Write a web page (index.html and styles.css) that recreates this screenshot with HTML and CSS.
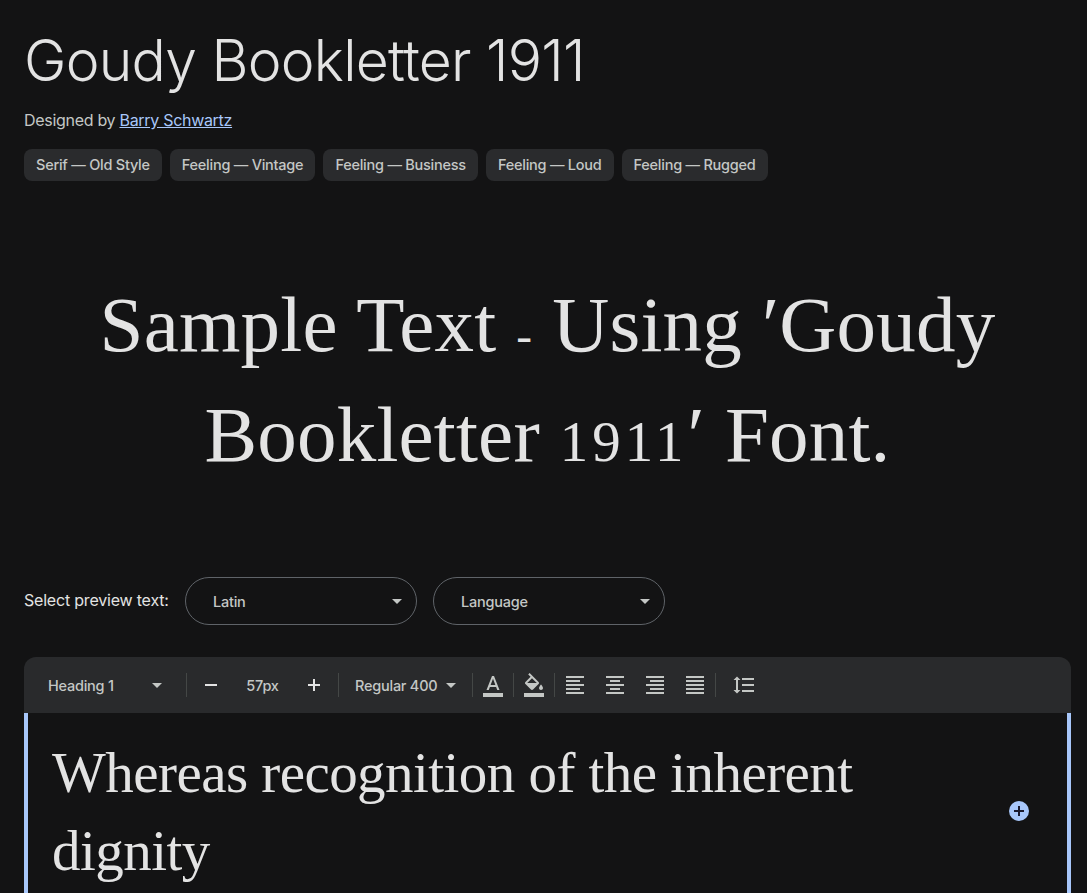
FILE: index.html
```html
<!DOCTYPE html>
<html lang="en">
<head>
<meta charset="utf-8">
<title>Goudy Bookletter 1911</title>
<link rel="stylesheet" href="styles.css">
</head>
<body>
<main class="page">
  <h1 class="title">Goudy Bookletter 1911</h1>
  <p class="designer">Designed by <a href="#">Barry Schwartz</a></p>
  <ul class="chips">
    <li class="chip">Serif — Old Style</li>
    <li class="chip">Feeling — Vintage</li>
    <li class="chip">Feeling — Business</li>
    <li class="chip">Feeling — Loud</li>
    <li class="chip">Feeling — Rugged</li>
  </ul>
  <p class="sample">Sample Text <span class="dash">-</span> Using ′Goudy<br>Bookletter <span class="figures">1911</span>′ Font.</p>
  <div class="select-row">
    <span class="select-label">Select preview text:</span>
    <div class="select"><span>Latin</span><i class="caret"></i></div>
    <div class="select"><span>Language</span><i class="caret"></i></div>
  </div>
  <div class="toolbar">
    <div class="tool style-tool"><span>Heading 1</span><i class="caret"></i></div>
    <i class="sep"></i>
    <div class="size-tool">
      <svg class="icon" viewBox="0 0 24 24"><path d="M6 12h12" /></svg>
      <span class="size">57px</span>
      <svg class="icon" viewBox="0 0 24 24"><path d="M12 6v12M6 12h12" /></svg>
    </div>
    <i class="sep"></i>
    <div class="tool weight-tool"><span>Regular 400</span><i class="caret"></i></div>
    <i class="sep"></i>
    <svg class="ticon" viewBox="0 0 24 24"><path class="fill" d="M2 20h20v4H2z"/><path class="fill" d="M11 3L5.500 17h2.250l1.120-3h6.250l1.120 3h2.250L13 3h-2zm-1.380 9L12 5.670 14.380 12H9.620z"/></svg>
    <i class="sep"></i>
    <svg class="ticon" viewBox="0 0 24 24"><path class="fill" d="M2 20h20v4H2z"/><path class="fill" d="M16.560 8.940L7.620 0 6.210 1.410l2.380 2.380-5.150 5.150c-.59.59-.59 1.540 0 2.120l5.500 5.500c.29.29.68.44 1.060.44s.77-.15 1.060-.44l5.500-5.500c.59-.58.59-1.530 0-2.120zM5.210 10L10 5.210 14.790 10H5.210zM19 11.500s-2 2.170-2 3.500c0 1.100.9 2 2 2s2-.9 2-2c0-1.330-2-3.500-2-3.500z"/></svg>
    <i class="sep"></i>
    <div class="aligns">
      <svg class="ticon" viewBox="0 0 24 24"><path class="line" d="M3 4h18M3 8h14M3 12h18M3 16h14M3 20h18" /></svg>
      <svg class="ticon" viewBox="0 0 24 24"><path class="line" d="M3 4h18M7 8h10M3 12h18M7 16h10M3 20h18" /></svg>
      <svg class="ticon" viewBox="0 0 24 24"><path class="line" d="M3 4h18M7 8h14M3 12h18M7 16h14M3 20h18" /></svg>
      <svg class="ticon" viewBox="0 0 24 24"><path class="line" d="M3 4h18M3 8h18M3 12h18M3 16h18M3 20h18" /></svg>
    </div>
    <i class="sep"></i>
    <svg class="ticon spacing" viewBox="0 0 24 24"><path class="fill" d="M6 7h2.500L5 3.500 1.500 7H4v10H1.500L5 20.500 8.500 17H6V7zm4-2v2h12V5H10zm0 14h12v-2H10v2zm0-6h12v-2H10v2z"/></svg>
  </div>
  <div class="editor">
    <p class="editor-text">Whereas recognition of the inherent dignity</p>
    <span class="add"><svg viewBox="0 0 20 20"><path d="M10 5v10M5 10h10" /></svg></span>
  </div>
</main>
</body>
</html>
```
FILE: styles.css
```css
* { box-sizing: border-box; }
html, body { margin: 0; height: 893px; overflow: hidden; background: #131314; }
body { color: #e3e3e3; font-family: "Inter", "Liberation Sans", sans-serif; }
.page { padding: 26px 16px 0 24px; }
.title { margin: 0; padding-top: 1px; height: 69px; font-family: "Inter", sans-serif; font-weight: 350; font-size: 57px; line-height: 68px; letter-spacing: -.75px; color: #e3e3e3; white-space: nowrap; }
.designer { margin: 15px 0 0; font-size: 16px; line-height: 20px; color: #c4c7c5; letter-spacing: -.3px; }
.designer a { color: #a8c7fa; text-decoration: underline; }
.chips { list-style: none; margin: 19px 0 0; padding: 0; display: flex; gap: 8px; }
.chip { height: 32px; padding: 0 12px; border-radius: 8px; background: #2a2b2d; color: #c4c7c5; font-size: 14.500px; font-weight: 500; line-height: 32px; letter-spacing: -.24px; white-space: nowrap; }
.sample { margin: 89px 0 0; height: 307px; text-align: center; font-family: "Liberation Serif", serif; font-size: 79px; line-height: 110px; color: #e3e3e3; letter-spacing: .2px; }
.dash { font-size: .6em; line-height: 0; }
.figures { font-size: .72em; line-height: 0; letter-spacing: 4px; }
.select-row { display: flex; align-items: center; height: 48px; }
.select-label { font-size: 16px; color: #e3e3e3; width: 161px; letter-spacing: -.2px; position: relative; top: -1px; }
.select { width: 232px; height: 48px; border: 1px solid #5f6368; border-radius: 24px; padding: 0 14px 0 27px; display: flex; align-items: center; justify-content: space-between; font-size: 14.500px; color: #c4c7c5; font-weight: 500; margin-right: 16px; letter-spacing: -.24px; }
.caret { display: block; width: 0; height: 0; border-left: 5px solid transparent; border-right: 5px solid transparent; border-top: 5px solid #c4c7c5; }
.toolbar { margin-top: 32px; height: 56px; background: #292a2c; border-radius: 12px 12px 0 0; display: flex; align-items: center; padding-left: 24px; color: #c4c7c5; font-size: 14.500px; font-weight: 500; letter-spacing: -.24px; }
.tool { display: flex; align-items: center; justify-content: space-between; }
.style-tool { width: 114px; margin-right: 24px; }
.weight-tool { width: 101px; margin: 0 16px; }
.sep { display: block; width: 1px; height: 24px; background: #444746; flex: none; }
.size-tool { width: 151px; padding: 0 12px; display: flex; align-items: center; justify-content: space-between; }
.size { color: #c4c7c5; }
.icon { width: 24px; height: 24px; fill: none; stroke: #e3e3e3; stroke-width: 2; }
.ticon { display: block; width: 24px; height: 24px; margin: 0 8px; flex: none; }
.fill { fill: #c4c7c5; }
.line { fill: none; stroke: #c4c7c5; stroke-width: 2; }
.aligns { display: flex; gap: 16px; margin: 0 8px; }
.aligns .ticon { margin: 0; }
.spacing { margin-left: 16px; }
.editor { position: relative; height: 180px; border-left: 4px solid #a8c7fa; border-right: 4px solid #a8c7fa; padding: 21px 190px 0 24px; }
.editor-text { margin: 0; font-family: "Liberation Serif", serif; font-size: 57px; line-height: 78px; letter-spacing: -.55px; color: #e3e3e3; }
.add { position: absolute; left: 981px; top: 88px; width: 20px; height: 20px; border-radius: 50%; background: #a8c7fa; display: block; }
.add svg { display: block; width: 20px; height: 20px; fill: none; stroke: #1a1a2e; stroke-width: 2; }
```
